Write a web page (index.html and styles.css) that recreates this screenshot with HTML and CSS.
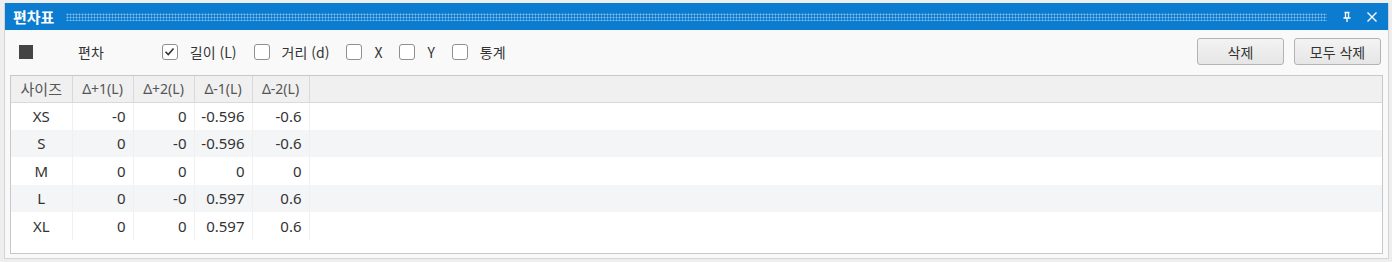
FILE: index.html
```html
<!DOCTYPE html>
<html lang="ko">
<head>
    <meta charset="UTF-8">
    <title>편차표</title>
    <link rel="stylesheet" href="styles.css">
</head>
<body>
    <div class="window">
        <div class="titlebar">
            <span class="title">편차표</span>
            <span class="grip"></span>
            <svg class="pin" width="12" height="12" viewBox="0 0 12 12">
                <path d="M3.5 1.5h5M4.5 1.5v5.5M7.5 1.5v5.5M2.5 7h7M6 7v4" stroke="#fff" stroke-width="1.3" fill="none"/>
            </svg>
            <svg class="close" width="12" height="12" viewBox="0 0 12 12">
                <path d="M1.5 1.5l9 9M10.5 1.5l-9 9" stroke="#fff" stroke-width="1.4" fill="none"/>
            </svg>
        </div>

        <div class="content">
            <div class="toolbar">
                <span class="swatch"></span>
                <span class="label">편차</span>
                <label class="check first">
                    <span class="box">
                        <svg width="13" height="13" viewBox="0 0 13 13"><path d="M2.5 6.8l2.8 2.8 5.2-6" stroke="#333" stroke-width="1.6" fill="none"/></svg>
                    </span>
                    <span>길이 <small>(L)</small></span>
                </label>
                <label class="check"><span class="box"></span><span>거리 <small>(d)</small></span></label>
                <label class="check"><span class="box"></span><span>X</span></label>
                <label class="check"><span class="box"></span><span>Y</span></label>
                <label class="check"><span class="box"></span><span>통계</span></label>

                <div class="actions">
                    <button type="button" class="btn btn-del">삭제</button>
                    <button type="button" class="btn btn-all">모두 삭제</button>
                </div>
            </div>

            <div class="grid">
                <table>
                    <thead>
                        <tr>
                            <th class="c-size">사이즈</th>
                            <th class="c1">Δ+1(L)</th>
                            <th class="c2">Δ+2(L)</th>
                            <th class="c3">Δ-1(L)</th>
                            <th class="c4">Δ-2(L)</th>
                            <th class="fill"></th>
                        </tr>
                    </thead>
                    <tbody>
                        <tr><td class="c-size">XS</td><td>-0</td><td>0</td><td>-0.596</td><td>-0.6</td><td class="fill"></td></tr>
                        <tr class="alt"><td class="c-size">S</td><td>0</td><td>-0</td><td>-0.596</td><td>-0.6</td><td class="fill"></td></tr>
                        <tr><td class="c-size">M</td><td>0</td><td>0</td><td>0</td><td>0</td><td class="fill"></td></tr>
                        <tr class="alt"><td class="c-size">L</td><td>0</td><td>-0</td><td>0.597</td><td>0.6</td><td class="fill"></td></tr>
                        <tr><td class="c-size">XL</td><td>0</td><td>0</td><td>0.597</td><td>0.6</td><td class="fill"></td></tr>
                    </tbody>
                </table>
            </div>
        </div>
    </div>
</body>
</html>
```

FILE: styles.css
```css
* {
    margin: 0;
    padding: 0;
    box-sizing: border-box;
}

body {
    font-family: "Noto Sans", "Noto Sans CJK KR", sans-serif;
    font-size: 14px;
    color: #333;
    background-color: #eeeeee;
    width: 1392px;
    height: 262px;
    overflow: hidden;
}

.window {
    margin: 3px 3px 0 4px;
    height: 256px;
    border: 1px solid #d4d4d4;
    border-top: none;
    background-color: #f9f9f9;
}

.titlebar {
    height: 27px;
    background-color: #0c7cd0;
    display: flex;
    align-items: center;
    padding: 0 8px 0 8px;
    color: #fff;
}

.title {
    font-weight: bold;
    font-size: 15px;
    font-family: "Noto Sans CJK KR", sans-serif;
}

.grip {
    flex: 1;
    height: 8px;
    margin: 0 14px 0 12px;
    background-image: radial-gradient(circle, rgba(255, 255, 255, 0.5) 0.9px, transparent 1.1px);
    background-size: 3px 3px;
}

.pin {
    margin-right: 13px;
}

.close {
    margin-right: 2px;
}

.content {
    padding: 0 5px 0 5px;
}

.toolbar {
    height: 45px;
    display: flex;
    align-items: center;
    padding: 0 0 2px 9px;
}

.swatch {
    width: 14px;
    height: 14px;
    background-color: #444;
}

.label {
    margin-left: 45px;
    font-family: "Noto Sans CJK KR", sans-serif;
}

.check {
    display: flex;
    align-items: center;
    gap: 12px;
    margin-left: 17px;
    font-family: "Noto Sans CJK KR", sans-serif;
}

.check.first {
    margin-left: 58px;
}

.check small {
    font-size: 14px;
}

.box {
    width: 16px;
    height: 16px;
    border: 1px solid #8f8f8f;
    border-radius: 3px;
    background-color: #fff;
    display: flex;
    align-items: center;
    justify-content: center;
}

.actions {
    margin-left: auto;
    display: flex;
    gap: 10px;
    padding-right: 2px;
}

.btn {
    height: 27px;
    width: 87px;
    border: 1px solid #b3b3b3;
    border-radius: 3px;
    background: linear-gradient(#f3f3f3, #e6e6e6);
    font-family: "Noto Sans CJK KR", sans-serif;
    font-size: 14px;
    color: #333;
}

.grid {
    height: 179px;
    border: 1px solid #c8c8c8;
    background-color: #fff;
}

table {
    width: 100%;
    border-collapse: collapse;
    table-layout: fixed;
    font-size: 15px;
}

th {
    height: 26px;
    background-color: #f0f0f0;
    font-weight: normal;
    color: #555;
    border-right: 1px solid #d9d9d9;
    border-bottom: 1px solid #d9d9d9;
    text-align: center;
    font-size: 14px;
}

th.c-size {
    font-size: 15px;
    font-family: "Noto Sans CJK KR", sans-serif;
}

td {
    height: 27.5px;
    text-align: right;
    padding-right: 7px;
    border-right: 1px solid #f0f0f0;
}

.alt td {
    background-color: #f4f5f6;
}

.c-size { width: 61px; }
.c1 { width: 61px; }
.c2 { width: 61px; }
.c3 { width: 58px; }
.c4 { width: 57px; }

td.c-size {
    text-align: center;
    padding-right: 0;
}

th.fill, td.fill {
    border-right: none;
}
```
